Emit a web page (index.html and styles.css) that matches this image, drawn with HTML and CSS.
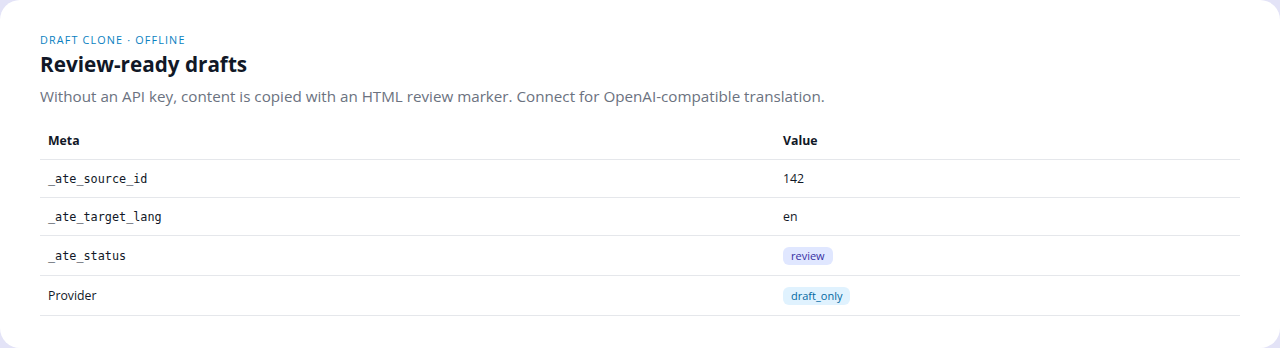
FILE: index.html
```html
<!DOCTYPE html>
<html lang="en">
<head>
<meta charset="utf-8">
<title>Review-ready drafts</title>
<link rel="stylesheet" href="styles.css">
</head>
<body>
<main class="card">
  <p class="eyebrow">Draft clone · Offline</p>
  <h1 class="title">Review-ready drafts</h1>
  <p class="desc">Without an API key, content is copied with an HTML review marker. Connect for OpenAI-compatible translation.</p>
  <table class="meta-table">
    <thead>
      <tr><th class="col-meta">Meta</th><th>Value</th></tr>
    </thead>
    <tbody>
      <tr><td class="mono">_ate_source_id</td><td>142</td></tr>
      <tr><td class="mono">_ate_target_lang</td><td>en</td></tr>
      <tr class="badge-row"><td class="mono">_ate_status</td><td><span class="badge badge-review">review</span></td></tr>
      <tr class="badge-row"><td>Provider</td><td><span class="badge badge-draft">draft_only</span></td></tr>
    </tbody>
  </table>
</main>
</body>
</html>
```

FILE: styles.css
```css
html, body {
  margin: 0;
  padding: 0;
}
body {
  background: #e3e3f7;
  font-family: "Open Sans", "Noto Sans", sans-serif;
  color: #111827;
}
.card {
  background: #ffffff;
  height: 348px;
  box-sizing: border-box;
  border-radius: 20px;
  padding: 33px 40px 0 40px;
}
.eyebrow {
  margin: 0;
  font-size: 10.8px;
  line-height: 14px;
  letter-spacing: 1.15px;
  text-transform: uppercase;
  color: #0b7fc1;
}
.title {
  margin: 3px 0 0 0;
  font-size: 20.7px;
  line-height: 28px;
  font-weight: 700;
  color: #111827;
}
.desc {
  margin: 8px 0 0 0;
  font-size: 15.2px;
  line-height: 21px;
  color: #6b7280;
}
.meta-table {
  width: 100%;
  margin-top: 15px;
  border-collapse: collapse;
  font-size: 12.3px;
}
.meta-table th,
.meta-table td {
  text-align: left;
  padding: 0 8px;
  border-bottom: 1px solid #e5e7eb;
  height: 37px;
}
.meta-table th {
  font-weight: 700;
  color: #111827;
}
.col-meta {
  width: 719px;
}
.badge-row td {
  height: 39px;
}
.mono {
  font-family: "DejaVu Sans Mono", "Liberation Mono", monospace;
  font-size: 11.8px;
}
.badge {
  display: inline-block;
  font-size: 11px;
  line-height: 14px;
  padding: 2px 8px;
  border-radius: 6px;
  font-weight: 500;
}
.badge-review {
  background: #e0e7ff;
  color: #3730a3;
}
.badge-draft {
  background: #e0f2fe;
  color: #0369a1;
}
```
